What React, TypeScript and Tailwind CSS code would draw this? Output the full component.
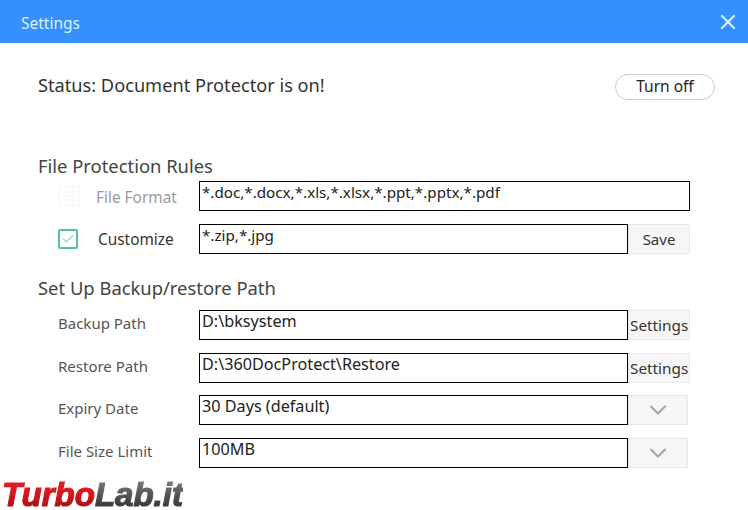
import { Check, ChevronDown, X } from "lucide-react";
import type { ReactNode } from "react";

function Field({ children, large }: { children: ReactNode; large?: boolean }) {
  return (
    <div
      className={`h-[30px] flex-1 overflow-hidden border border-black bg-white pl-[2px] text-[#222] ${
        large ? "text-[16.2px] leading-[21px]" : "text-[15.2px] leading-[20px]"
      }`}
    >
      {children}
    </div>
  );
}

function SaveButton() {
  return (
    <div className="flex h-[30px] w-[62px] items-center justify-center border border-[#e8e8e8] bg-[#f6f6f6] text-[15px] text-[#333]">
      Save
    </div>
  );
}

function SettingsButton() {
  return (
    <div className="flex h-[30px] w-[62px] items-center whitespace-nowrap border border-[#e8e8e8] bg-[#f6f6f6] pl-[1px] text-[15.3px] text-[#333]">
      Settings
    </div>
  );
}

function DropButton() {
  return (
    <div className="mr-[2px] flex h-[30px] w-[60px] items-center justify-center border border-[#e8e8e8] bg-[#f6f6f6]">
      <ChevronDown className="h-[28px] w-[28px] text-[#a3a3a8]" strokeWidth={1.8} />
    </div>
  );
}

function PathRow({ label, value, side }: { label: string; value: string; side: ReactNode }) {
  return (
    <div className="flex h-[30px]">
      <div className="w-[161px] pl-[20px] text-[15px] leading-[26px] text-[#555]">{label}</div>
      <Field large>{value}</Field>
      {side}
    </div>
  );
}

export default function App() {
  return (
    <div className="relative h-[510px] w-[748px] overflow-hidden bg-white font-['Noto_Sans','Open_Sans',sans-serif]">
      <header className="flex h-[43px] items-center justify-between bg-[#3590fe] pl-[21px] pr-[8px] text-[15.5px] text-[#d8efff]">
        <span className="mt-[4px]">Settings</span>
        <X className="h-[24px] w-[24px] text-[#d8efff]" strokeWidth={2.2} />
      </header>

      <main className="pl-[38px] pr-[58px]">
        <div className="mt-[31px] flex h-[26px] items-center justify-between">
          <span className="-mt-[2px] text-[18.2px] text-[#333]">Status: Document Protector is on!</span>
          <span className="-mr-[25px] flex h-[26px] w-[100px] items-center justify-center rounded-full border border-[#c8cad8] text-[15.5px] text-[#222]">
            Turn off
          </span>
        </div>

        <h2 className="mt-[53px] h-[26px] text-[18.4px] leading-[26px] text-[#444]">File Protection Rules</h2>

        <div className="mt-[2px] flex h-[30px] items-center">
          <div className="flex w-[161px] items-center pl-[20px]">
            <svg className="h-[22px] w-[22px]" viewBox="0 0 22 22" fill="none" stroke="#f7f7f7" strokeWidth="1.5">
              <rect x="1" y="1" width="20" height="20" rx="1" />
              <path d="M5 7h12M5 11h12M5 15h12" />
            </svg>
            <span className="ml-[16px] mt-[3px] text-[15.4px] text-[#9a9a9a]">File Format</span>
          </div>
          <Field>*.doc,*.docx,*.xls,*.xlsx,*.ppt,*.pptx,*.pdf</Field>
        </div>

        <div className="mt-[13px] flex h-[30px] items-center">
          <div className="flex w-[161px] items-center pl-[20px]">
            <span className="flex h-[20px] w-[20px] items-center justify-center rounded-[2px] border-2 border-[#55c39a]">
              <Check className="h-[14px] w-[14px] text-[#9adfc0]" strokeWidth={2.4} />
            </span>
            <span className="ml-[20px] mt-[1px] text-[15.4px] text-[#333]">Customize</span>
          </div>
          <Field>*.zip,*.jpg</Field>
          <SaveButton />
        </div>

        <h2 className="mt-[21px] h-[26px] text-[18.4px] leading-[26px] text-[#444]">Set Up Backup/restore Path</h2>

        <div className="mt-[9px] flex flex-col">
          <PathRow label="Backup Path" value="D:\bksystem" side={<SettingsButton />} />
          <div className="mt-[13px]">
            <PathRow label="Restore Path" value="D:\360DocProtect\Restore" side={<SettingsButton />} />
          </div>
          <div className="mt-[12px]">
            <PathRow label="Expiry Date" value="30 Days (default)" side={<DropButton />} />
          </div>
          <div className="mt-[13px]">
            <PathRow label="File Size Limit" value="100MB" side={<DropButton />} />
          </div>
        </div>
      </main>

      {/* watermark over the page */}
      <div className="absolute left-[2px] top-[479px] whitespace-nowrap font-['Liberation_Sans',sans-serif] text-[33px] font-bold italic leading-[31px] text-transparent [-webkit-text-stroke:1.2px_transparent]">
        <span className="bg-gradient-to-b from-[#e8202a] via-[#d8141c] to-[#8c1014] bg-clip-text">Turbo</span>
        <span className="bg-gradient-to-b from-[#8a8a8a] via-[#555] to-[#2a2a2a] bg-clip-text">Lab.it</span>
      </div>
    </div>
  );
}
